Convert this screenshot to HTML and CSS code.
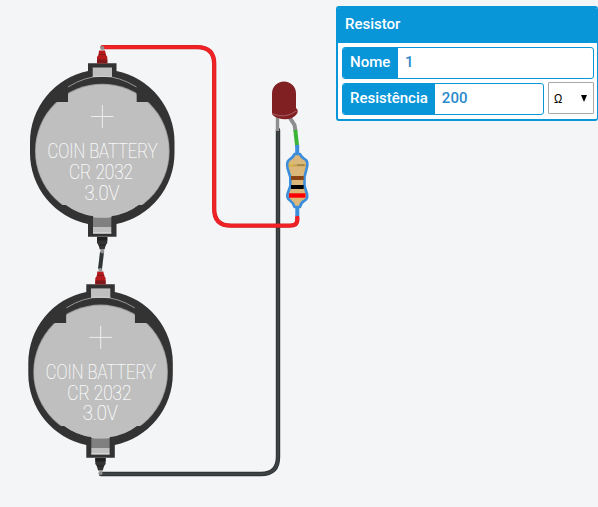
FILE: index.html
```html
<!DOCTYPE html>
<html lang="pt">
<head>
<meta charset="utf-8">
<title>Circuito</title>
<link rel="stylesheet" href="styles.css">
</head>
<body>
<main class="editor">
<svg class="circuit" width="336" height="507" viewBox="0 0 336 507">
  <defs>
    <clipPath id="cell-clip"><path d="M68 80H136.5V102H175V205H138.5Q127 214 111.5 216V220H93V216Q78 214 66 205H25V102H68Z"/></clipPath>
    <g id="battery">
      <path fill="#333" d="M88 63.3H116.5V71A72.4 72.4 0 0 1 174.5 142V153A72.4 72.4 0 0 1 116.5 224V236.8H88V224A72.4 72.4 0 0 1 30 153V142A72.4 72.4 0 0 1 88 71Z"/>
      <circle cx="102.3" cy="151" r="67.3" fill="#9b9b9b" clip-path="url(#cell-clip)"/>
      <circle cx="102.3" cy="151.2" r="66.5" fill="#bfbfbf" clip-path="url(#cell-clip)"/>
      <path d="M68 87Q102 65.5 136.5 87" fill="none" stroke="#969696"/>
      <path d="M92.7 67.5H112V76.8H92.7Z" fill="#bfbfbf"/>
      <path d="M92.7 76.4H112" stroke="#ddd" stroke-width=".7"/>
      <path d="M93 218H111.3V227H93Z" fill="#808080"/>
      <path d="M93 227H111.3V233.5H93Z" fill="#bfbfbf"/>
      <path d="M93 233H111.3" stroke="#e5e5e5"/>
      <path d="M91 116.5H113.5M102.4 105V128" stroke="#eee" stroke-width="1"/>
      <g class="battery-label">
        <text x="47.5" y="158.4" textLength="110" lengthAdjust="spacingAndGlyphs">COIN BATTERY</text>
        <text x="69" y="179" textLength="64" lengthAdjust="spacingAndGlyphs">CR 2032</text>
        <text x="84.5" y="199.5" textLength="35" lengthAdjust="spacingAndGlyphs">3.0V</text>
      </g>
      <path d="M99 50.5H105L106 55L107.3 57V63.3H97V57L98.5 55Z" fill="#b5191c"/>
      <path d="M97 59.5H107.3V63.3H97Z" fill="#80191b"/>
      <path d="M98.6 54.5H106" stroke="#89191b"/>
      <path d="M97 237H107.3V243L105.8 245L104.5 249.5H99.8L98.5 245L97 243Z" fill="#333"/>
      <path d="M97 237H107.3V240.5H97Z" fill="#202020"/>
      <path d="M98.5 245H105.8" stroke="#202020"/>
    </g>
  </defs>
  <use href="#battery"/>
  <use href="#battery" x="-1.7" y="220.9"/>
  <g fill="none" stroke-linecap="round">
    <path d="M278 130V457Q278 474 261 474H101" stroke="#2d3133" stroke-width="4.4"/>
    <path d="M278 130V457Q278 474 261 474H101" stroke="#3d4245" stroke-width="2.6"/>
    <path d="M102.5 47.2H197Q214.2 47.2 214.2 64V209Q214.2 225.7 231 225.7H290Q297.3 225.7 297.3 220V217" stroke="#cf2023" stroke-width="4.3"/>
    <path d="M102.5 47.2H197Q214.2 47.2 214.2 64V209Q214.2 225.7 231 225.7H290Q297.3 225.7 297.3 220V217" stroke="#f02225" stroke-width="3.2"/>
    <path d="M102 252L100 269" stroke="#303536" stroke-width="4" stroke-linecap="butt"/>
  </g>
  <g fill="#919191">
    <circle cx="102.3" cy="48" r="2.1"/><circle cx="102.3" cy="251.5" r="2"/>
    <circle cx="100.4" cy="270" r="2"/><circle cx="100.5" cy="473" r="2.1"/>
  </g>
  <g fill="none" stroke-width="4">
    <path d="M277.5 117V131" stroke="#8e8e8e" stroke-width="3.4"/>
    <path d="M290 118L294.5 125L295.5 131" stroke="#8e8e8e"/>
    <path d="M295.3 130L297.2 147" stroke="#39b537"/>
    <path d="M297.2 145V153M297.3 204V216" stroke="#3c8dda"/>
  </g>
  <path d="M272 93.5A12 12 0 0 1 296 93.5V108Q298 109 297.7 112Q297 115 292 118Q285 120.5 278 118Q272 116 272 113Z" fill="#812023"/>
  <path d="M272.5 113.5Q284 119.5 296.5 111" fill="none" stroke="#a96163"/>
  <path d="M294.5 154H300Q301 157 306 160Q308 162 307 167L304.5 177V186L307 194Q308 199 304 201Q300.5 203 300 207H294.5Q293.5 203 290 200.5Q286.5 198 287.5 194L290.3 186V177L287.5 168Q286.5 162 289 160Q293.5 157 294.5 154Z" fill="#dbb77a" stroke="#3c8dda" stroke-width="2.6" stroke-linejoin="round"/>
  <path d="M288.5 165.5H306" stroke="#c6a04e" stroke-width="1.7"/>
  <path d="M289.5 165H293" stroke="#ded12c"/><path d="M297 165H304.5" stroke="#807035"/>
  <path d="M291 178H303.7" stroke="#8b4514" stroke-width="4"/>
  <path d="M291 187H303.7" stroke="#000" stroke-width="4"/>
  <path d="M289 195.5H305.5" stroke="#f00" stroke-width="4.4"/>
</svg>
<section class="inspector">
  <h1 class="inspector-title">Resistor</h1>
  <div class="fields">
    <label class="field"><span class="field-name name">Nome</span><span class="field-value">1</span></label>
    <div class="field-row">
      <label class="field resistance"><span class="field-name">Resistência</span><span class="field-value">200</span></label>
      <div class="unit"><span class="ohm">Ω</span><svg width="6" height="7" viewBox="0 0 6 7"><path d="M0 0H6L3 7Z"/></svg></div>
    </div>
  </div>
</section>
</main>
</body>
</html>
```
FILE: styles.css
```css
* { box-sizing: border-box; }
body { margin: 0; background: #f4f5f7; font-family: Roboto, sans-serif; overflow: hidden; }
.editor { display: flex; align-items: flex-start; width: 598px; height: 507px; }
.circuit { flex: none; display: block; }
.battery-label { font-family: Roboto, sans-serif; font-size: 21px; font-weight: 100; fill: #fff; stroke: #fff; stroke-width: .2px; }
.inspector { width: 262px; height: 115px; margin-top: 6px; border: 2px solid #0896d9; border-right-width: 1px; border-radius: 3px; background: #fff; overflow: hidden; }
.inspector-title { height: 35px; margin: 0; padding-left: 7px; background: #0896d9; color: #fff; font-size: 15px; font-weight: 500; line-height: 32px; }
.fields { display: flex; flex-direction: column; gap: 3px; padding: 4px 3px 0 4px; }
.field { display: flex; height: 32px; border: 1px solid #0896d9; border-radius: 3px; overflow: hidden; font-size: 15px; font-weight: 500; line-height: 28px; }
.field-name { padding: 0 7px; background: #0896d9; color: #fff; }
.name { width: 55px; }
.field-value { padding-left: 7px; color: #2a8acb; }
.field-row { display: flex; gap: 4px; padding-top: 1px; }
.resistance { width: 202px; }
.unit { display: flex; flex: 1; align-items: center; justify-content: space-between; height: 32px; margin-top: -1px; padding: 0 6px 0 5px; border: 1px solid #a9a9a9; border-radius: 1px; font-family: "Liberation Sans", sans-serif; font-size: 13px; }
.ohm { transform: scaleX(.85); transform-origin: left; }
```
